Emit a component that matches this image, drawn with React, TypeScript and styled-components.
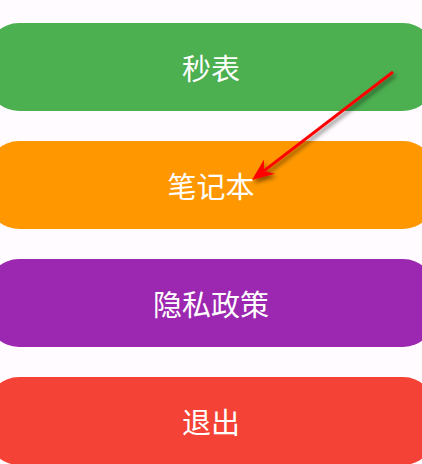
import styled, { createGlobalStyle } from 'styled-components';

const GlobalStyle = createGlobalStyle`
  html, body {
    margin: 0;
    padding: 0;
    background: #fffbfe;
    overflow: hidden;
  }
  body {
    font-family: "Noto Sans CJK SC", "Noto Sans", sans-serif;
  }
`;

const Screen = styled.div`
  position: relative;
  width: 422px;
  height: 464px;
  overflow: hidden;
  background: #fffbfe;
`;

const Menu = styled.div`
  display: flex;
  flex-direction: column;
  gap: 30px;
  padding-top: 23px;
  margin: 0 -13px;
`;

const MenuButton = styled.button<{ $color: string }>`
  display: flex;
  align-items: center;
  justify-content: center;
  height: 88px;
  width: 100%;
  border: none;
  border-radius: 32px;
  background: ${({ $color }) => $color};
  color: #ffffff;
  font-family: "Noto Sans CJK SC", "Noto Sans", sans-serif;
  font-size: 29px;
  font-weight: 400;
  letter-spacing: 0;
  padding: 0;
  cursor: pointer;
`;

const ArrowLayer = styled.svg`
  position: absolute;
  left: 0;
  top: 0;
  width: 422px;
  height: 464px;
  pointer-events: none;
`;

const items = [
  { label: '秒表', color: '#4caf50' },
  { label: '笔记本', color: '#ff9800' },
  { label: '隐私政策', color: '#9c27b0' },
  { label: '退出', color: '#f44336' },
];

// arrow from the top-right of the first button pointing at the notebook label
const start = { x: 393, y: 72 };
const tip = { x: 252, y: 180 };
const dx = tip.x - start.x;
const dy = tip.y - start.y;
const len = Math.hypot(dx, dy);
const ux = dx / len;
const uy = dy / len;
const px = -uy;
const py = ux;
const headLen = 22;
const headHalf = 9;
const back = { x: tip.x - ux * headLen, y: tip.y - uy * headLen };
const notch = { x: tip.x - ux * 15, y: tip.y - uy * 15 };
const head = [
  `${tip.x},${tip.y}`,
  `${back.x + px * headHalf},${back.y + py * headHalf}`,
  `${notch.x},${notch.y}`,
  `${back.x - px * headHalf},${back.y - py * headHalf}`,
].join(' ');

export default function App() {
  return (
    <>
      <GlobalStyle />
      <Screen>
        <Menu>
          {items.map((item) => (
            <MenuButton key={item.label} $color={item.color}>
              {item.label}
            </MenuButton>
          ))}
        </Menu>
        <ArrowLayer viewBox="0 0 422 464">
          <defs>
            <filter id="arrowShadow" x="-20%" y="-20%" width="140%" height="140%">
              <feDropShadow dx="2" dy="3" stdDeviation="2" floodColor="#000" floodOpacity="0.5" />
            </filter>
          </defs>
          <g filter="url(#arrowShadow)">
            <line
              x1={start.x}
              y1={start.y}
              x2={notch.x}
              y2={notch.y}
              stroke="#ff0000"
              strokeWidth={3}
              strokeLinecap="butt"
            />
            <polygon points={head} fill="#ff0000" />
          </g>
        </ArrowLayer>
      </Screen>
    </>
  );
}
